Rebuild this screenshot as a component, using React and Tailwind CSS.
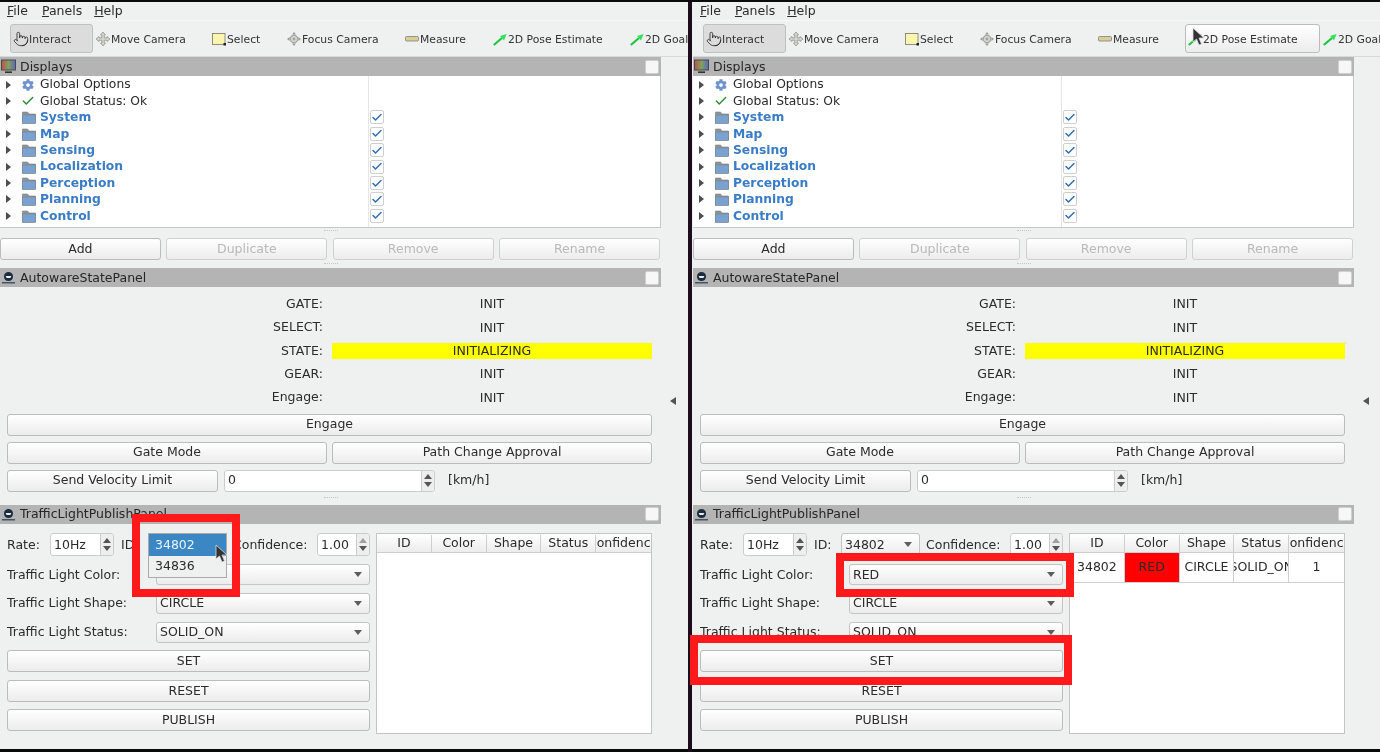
import React from 'react';
import { Check, Pointer } from 'lucide-react';
import { FaCog } from 'react-icons/fa';

const treeGroups = ['System', 'Map', 'Sensing', 'Localization', 'Perception', 'Planning', 'Control'];
const stateRows = [
  ['GATE:', 'INIT'],
  ['SELECT:', 'INIT'],
  ['STATE:', 'INITIALIZING'],
  ['GEAR:', 'INIT'],
  ['Engage:', 'INIT'],
];
const tableHead = ['ID', 'Color', 'Shape', 'Status', 'onfidenc'];

function MoveIcon() {
  return (
    <svg width="14" height="14" viewBox="0 0 14 14" className="shrink-0">
      <path d="M7 0 9.5 3H8.2v2.8H11V4.5L14 7l-3 2.5V8.2H8.2V11h1.3L7 14l-2.5-3h1.3V8.2H3v1.3L0 7l3-2.5v1.3h2.8V3H4.5z" fill="#d6d6d0" stroke="#8a8a86" strokeWidth="0.7" />
    </svg>
  );
}

function SelectIcon() {
  return (
    <svg width="14" height="14" viewBox="0 0 14 14" className="shrink-0">
      <rect x="0.5" y="1.5" width="12.5" height="11" fill="#fbf5ae" stroke="#77776c" strokeWidth="0.8" />
      <rect x="11.5" y="11" width="2.5" height="2.5" fill="#222" />
    </svg>
  );
}

function FocusIcon() {
  return (
    <svg width="14" height="14" viewBox="0 0 14 14" className="shrink-0">
      <path d="M7 0 9 2.6H5zM7 14 5 11.4h4zM0 7l2.6-2v4zM14 7l-2.6 2V5z" fill="#9a9a96" />
      <circle cx="7" cy="7" r="3.8" fill="#d4d4d0" stroke="#8a8a86" strokeWidth="0.8" />
      <circle cx="7" cy="7" r="1.4" fill="#a4a4a0" />
    </svg>
  );
}

function MeasureIcon() {
  return (
    <svg width="14" height="14" viewBox="0 0 14 14" className="shrink-0">
      <rect x="0.5" y="4.5" width="13" height="4.5" rx="1" fill="#d9cf96" stroke="#808078" strokeWidth="0.8" />
    </svg>
  );
}

function ArrowIcon() {
  return (
    <svg width="14" height="14" viewBox="0 0 14 14" className="shrink-0">
      <path d="M0.8 13 9 6" stroke="#1fc43f" strokeWidth="2.2" />
      <path d="M13.6 2 11 8.500 7 4z" fill="#35e05a" />
    </svg>
  );
}

function MonitorIcon() {
  return (
    <svg width="15" height="15" viewBox="0 0 15 15" className="shrink-0">
      <defs>
        <linearGradient id="screen" x1="0" x2="1" y1="0" y2="0">
          <stop offset="0" stopColor="#c2504a" />
          <stop offset="0.5" stopColor="#7fa25c" />
          <stop offset="1" stopColor="#5a68c0" />
        </linearGradient>
      </defs>
      <rect x="0.5" y="1" width="14" height="10" fill="url(#screen)" stroke="#4a4a4a" />
      <rect x="4" y="12.4" width="7" height="1.6" fill="#333" />
    </svg>
  );
}

function PanelIcon() {
  return (
    <svg width="15" height="15" viewBox="0 0 15 15" className="shrink-0">
      <path d="M3 6.5C3 3.5 5 2 7.5 2s4.500 1.500 4.500 4.500-2 4.500-4.500 4.500S3 9.500 3 6.500z" fill="#1d2c3d" />
      <path d="M4.600 6h5.800L9.400 8H5.600z" fill="#e8eef2" />
      <rect x="1" y="12" width="13" height="1.500" fill="#41556a" />
    </svg>
  );
}

function FolderIcon() {
  return (
    <svg width="14" height="14" viewBox="0 0 14 14" className="shrink-0">
      <path d="M0.500 2h5l1.500 2h6.500v9H0.500z" fill="#8e9398" stroke="#777c80" strokeWidth="0.6" />
      <rect x="0.500" y="5" width="13" height="8.500" fill="#7aa2d0" stroke="#7b8288" strokeWidth="0.6" />
    </svg>
  );
}

function Expander() {
  return (
    <svg width="5" height="8" viewBox="0 0 5 8" className="ml-[6px] mr-[10px] shrink-0">
      <path d="M0 0l5 4-5 4z" fill="#4d4d4d" />
    </svg>
  );
}

function Btn({ children, disabled, className = '' }) {
  return (
    <div className={`h-[22px] flex items-center justify-center rounded-[3px] border border-[#bcbcbc] bg-linear-to-b from-white to-[#ececec] ${disabled ? 'text-[#b9b9b9] border-[#d0d0d0]' : ''} ${className}`}>
      {children}
    </div>
  );
}

function Combo({ value, className = '' }) {
  return (
    <div className={`flex items-center justify-between pl-[3px] pr-[7px] rounded-[3px] border border-[#c4c4c4] bg-linear-to-b from-white to-[#ececec] ${className}`}>
      <span>{value}</span>
      <svg width="8" height="5" viewBox="0 0 8 5" className="shrink-0">
        <path d="M0 0h8L4 5z" fill="#5e5e5e" />
      </svg>
    </div>
  );
}

function Spin({ value, className = '', faded }) {
  return (
    <div className={`flex items-center rounded-[3px] border border-[#cccccc] bg-white ${className}`}>
      <span className="flex-1 pl-[3px]">{value}</span>
      <div className="w-[13px] self-stretch flex flex-col items-center justify-center gap-[3px] bg-[#eeeeee] border-l border-[#cccccc] rounded-r-[3px]">
        <svg width="8" height="5" viewBox="0 0 8 5"><path d="M4 0l4 5H0z" fill={faded ? '#a0a0a0' : '#555'} /></svg>
        <svg width="8" height="5" viewBox="0 0 8 5"><path d="M0 0h8L4 5z" fill="#555" /></svg>
      </div>
    </div>
  );
}

function Title({ icon, label, box, low }) {
  return (
    <div className="h-[19px] bg-[#b4b4b4] flex items-center">
      <span className="ml-[1px] mr-[4px] flex">{icon}</span>
      <span className={`flex-1 text-[#262626] ${low ? 'pt-[2px]' : ''}`}>{label}</span>
      {box && <div className="w-[14px] h-[14px] mr-[2px] bg-[#f7f7f7] border border-[#cfcfcf] rounded-[2px]" />}
    </div>
  );
}

function Grip({ className = '' }) {
  return <div className={`mx-auto w-[14px] border-t border-dotted border-[#c6c6c6] ${className}`} />;
}

function ToolItem({ icon, label, width, active, raised }) {
  return (
    <div
      className={`h-[29px] shrink-0 flex items-center pl-[2px] pt-[2px] rounded-[3px] border ${
        active ? 'bg-[#dcdcdc] border-[#bfbfbf]' : raised ? 'bg-linear-to-b from-white to-[#ececec] border-[#bcbcbc]' : 'border-transparent'
      } ${width}`}
    >
      {icon}
      <span className="ml-[1px] mt-[3px] text-[10.800px] whitespace-nowrap text-[#333]">{label}</span>
    </div>
  );
}

function Window({ right }) {
  return (
    <div className={`w-[688px] h-[747px] shrink-0 overflow-hidden bg-[#eff0f0] text-[12.500px] text-[#2b2b2b] ${right ? 'pl-[1px]' : ''}`}>
      {/* menu bar */}
      <div className="h-[18px] flex items-center pl-[7px]">
        <span><u className="decoration-1">F</u>ile</span>
        <span className="ml-[14px]"><u className="decoration-1">P</u>anels</span>
        <span className="ml-[12px]"><u className="decoration-1">H</u>elp</span>
      </div>

      {/* toolbar */}
      <div className="h-[37px] flex items-center pl-[10px] pb-[1px] border-t border-[#f6f6f6] border-b border-b-[#d8d8d8]">
        <ToolItem icon={<Pointer size={16} strokeWidth={1.200} className="shrink-0 -mr-[1px] text-[#222]" />} label="Interact" width="w-[83px]" active />
        <ToolItem icon={<MoveIcon />} label="Move Camera" width="w-[116px]" />
        <ToolItem icon={<SelectIcon />} label="Select" width="w-[75px]" />
        <ToolItem icon={<FocusIcon />} label="Focus Camera" width="w-[118px]" />
        <ToolItem icon={<MeasureIcon />} label="Measure" width="w-[88px]" />
        <ToolItem icon={<ArrowIcon />} label="2D Pose Estimate" width={right ? 'w-[135px] ml-[2px]' : 'w-[137px]'} raised={right} />
        <ToolItem icon={<ArrowIcon />} label="2D Goal" width="w-[60px]" />
      </div>

      <div className="flex">
        <div className="w-[661px] shrink-0">
          {/* displays panel */}
          <Title icon={<MonitorIcon />} label="Displays" box low />
          <div className="h-[152px] bg-white border-b border-r border-[#c8c8c8] flex text-[12.300px]">
            <div className="w-[368px] shrink-0 pt-[0.500px]">
              <div className="h-[16.400px] flex items-center">
                <Expander />
                <FaCog size={12} className="ml-[1px] mr-[6px] text-[#6f93d0]" />
                <span>Global Options</span>
              </div>
              <div className="h-[16.400px] flex items-center">
                <Expander />
                <Check size={14} strokeWidth={2.500} className="mr-[5px] text-[#2f8a35]" />
                <span>Global Status: Ok</span>
              </div>
              {treeGroups.map((name) => (
                <div key={name} className="h-[16.400px] flex items-center">
                  <Expander />
                  <span className="ml-[1px] mr-[4px] flex"><FolderIcon /></span>
                  <span className="font-bold text-[#3a7cc6]">{name}</span>
                </div>
              ))}
            </div>
            <div className="flex-1 border-l border-[#e6e6e6] pt-[33.300px] pl-[1px]">
              {treeGroups.map((name) => (
                <div key={name} className="h-[16.400px] flex items-center">
                  <div className="w-[14px] h-[14px] flex items-center justify-center bg-white border border-[#cfcfcf] rounded-[2px]">
                    <Check size={13} strokeWidth={3} className="text-[#2f6fb5]" />
                  </div>
                </div>
              ))}
            </div>
          </div>
          <Grip className="mt-[2px]" />
          <div className="mt-[7px] pr-[1px] flex gap-[5.500px]">
            <Btn className="flex-1">Add</Btn>
            <Btn className="flex-1" disabled>Duplicate</Btn>
            <Btn className="flex-1" disabled>Remove</Btn>
            <Btn className="flex-1" disabled>Rename</Btn>
          </div>
          <Grip className="mt-[3px]" />
          <div className="mt-[4px]">
            <Title icon={<PanelIcon />} label="AutowareStatePanel" box low />
          </div>

          {/* autoware state */}
          <div className="pl-[7px] pr-[9px] pt-[5.600px] pb-[4.400px]">
            {stateRows.map(([label, value]) => (
              <div key={label} className="h-[23.400px] flex items-center">
                <span className="w-[316px] text-right">{label}</span>
                <span className={`ml-[9px] flex-1 text-center leading-[16px] ${value === 'INITIALIZING' ? 'bg-[#ffff00]' : ''}`}>{value}</span>
              </div>
            ))}
            <Btn className="mt-[4px]">Engage</Btn>
            <div className="mt-[6px] flex gap-[5px]">
              <Btn className="flex-1">Gate Mode</Btn>
              <Btn className="flex-1">Path Change Approval</Btn>
            </div>
            <div className="mt-[6px] flex items-center">
              <Btn className="w-[211px]">Send Velocity Limit</Btn>
              <Spin value="0" className="ml-[6px] w-[211px] h-[22px]" />
              <span className="ml-[13px]">[km/h]</span>
            </div>
          </div>
          <Grip className="mt-[1px]" />
          <div className="mt-[7px]">
            <Title icon={<PanelIcon />} label="TrafficLightPublishPanel" box />
          </div>

          {/* traffic light */}
          <div className="pl-[7px] pt-[9px] flex gap-[6px]">
            <div className="w-[363px] shrink-0">
              <div className="h-[23px] flex items-center pt-[1px]">
                <span className="w-[43px]">Rate:</span>
                <Spin value="10Hz" className="w-[64px] h-[23px]" />
                <span className="ml-[7px] w-[27px]">ID:</span>
                <Combo value="34802" className="w-[79px] h-[23px]" />
                <span className="ml-[6px] w-[84px] whitespace-nowrap">Confidence:</span>
                <Spin value="1.00" className="w-[53px] h-[23px]" faded />
              </div>
              <div className="mt-[8px] h-[22px] flex items-center">
                <span className="w-[149px]">Traffic Light Color:</span>
                <Combo value={right ? 'RED' : ''} className="flex-1 h-[21px]" />
              </div>
              <div className="mt-[6.500px] h-[22px] flex items-center">
                <span className="w-[149px]">Traffic Light Shape:</span>
                <Combo value="CIRCLE" className="flex-1 h-[21px]" />
              </div>
              <div className="mt-[7px] h-[22px] flex items-center">
                <span className="w-[149px]">Traffic Light Status:</span>
                <Combo value="SOLID_ON" className="flex-1 h-[21px]" />
              </div>
              <Btn className="mt-[6.500px]">SET</Btn>
              <Btn className="mt-[8.500px]">RESET</Btn>
              <Btn className="mt-[7px]">PUBLISH</Btn>
            </div>

            <div className="w-[276px] h-[201px] bg-white border border-[#c4c4c4]">
              <div className="grid grid-cols-5 h-[19px] pt-[1px] border-b border-[#cfcfcf] bg-linear-to-b from-white to-[#ececec]">
                {tableHead.map((h) => (
                  <div key={h} className="flex items-center justify-center overflow-hidden whitespace-nowrap border-r border-[#cfcfcf] last:border-r-0">{h}</div>
                ))}
              </div>
              {right && (
                <div className="grid grid-cols-5 h-[30px] border-b border-[#cfcfcf]">
                  <div className="flex items-center justify-center border-r border-[#cfcfcf]">34802</div>
                  <div className="flex items-center justify-center bg-[#ff0000] border-r border-[#cfcfcf]">RED</div>
                  <div className="flex items-center justify-center border-r border-[#cfcfcf]">CIRCLE</div>
                  <div className="flex items-center justify-center overflow-hidden whitespace-nowrap border-r border-[#cfcfcf]">SOLID_ON</div>
                  <div className="flex items-center justify-center">1</div>
                </div>
              )}
            </div>
          </div>
        </div>

        {/* collapsed side dock */}
        <div className="flex-1 flex items-start pt-[340px] pl-[9px]">
          <svg width="6" height="8" viewBox="0 0 6 8"><path d="M6 0v8L0 4z" fill="#555" /></svg>
        </div>
      </div>
    </div>
  );
}

function RedBox({ className }) {
  return <div className={`absolute border-[8px] border-[#fe1a1a] ${className}`} />;
}

function Cursor({ className }) {
  return (
    <svg width="14" height="20" viewBox="0 0 14 20" className={`absolute ${className}`}>
      <path d="M1 1v14l3.500-3 2.500 6 2.500-1-2.500-6H12z" fill="#333" stroke="#ddd" strokeWidth="0.8" />
    </svg>
  );
}

export default function App() {
  return (
    <div className="relative w-[1380px] h-[752px] overflow-hidden bg-[#0a0a0a] pt-[2px] flex blur-[0.4px] font-['DejaVu_Sans',sans-serif]">
      <Window />
      <div className="w-[4px] shrink-0 bg-[#1c0c1c]" />
      <Window right />

      {/* id dropdown on the left window */}
      <div className="absolute left-[148px] top-[533px] w-[79px] h-[45px] bg-[#eff0f0] border border-[#aaaaaa] text-[12.500px] text-[#2b2b2b]">
        <div className="h-[22px] pl-[6px] flex items-center bg-[#3a87c4] text-[#eaf2f8]">34802</div>
        <div className="h-[21px] pl-[6px] flex items-center">34836</div>
      </div>
      <Cursor className="left-[215px] top-[544px]" />
      <Cursor className="left-[1192px] top-[27px]" />

      <RedBox className="left-[132px] top-[514px] w-[108px] h-[83px]" />
      <RedBox className="left-[836px] top-[553px] w-[238px] h-[44px]" />
      <RedBox className="left-[690px] top-[635px] w-[382px] h-[50px]" />
    </div>
  );
}
